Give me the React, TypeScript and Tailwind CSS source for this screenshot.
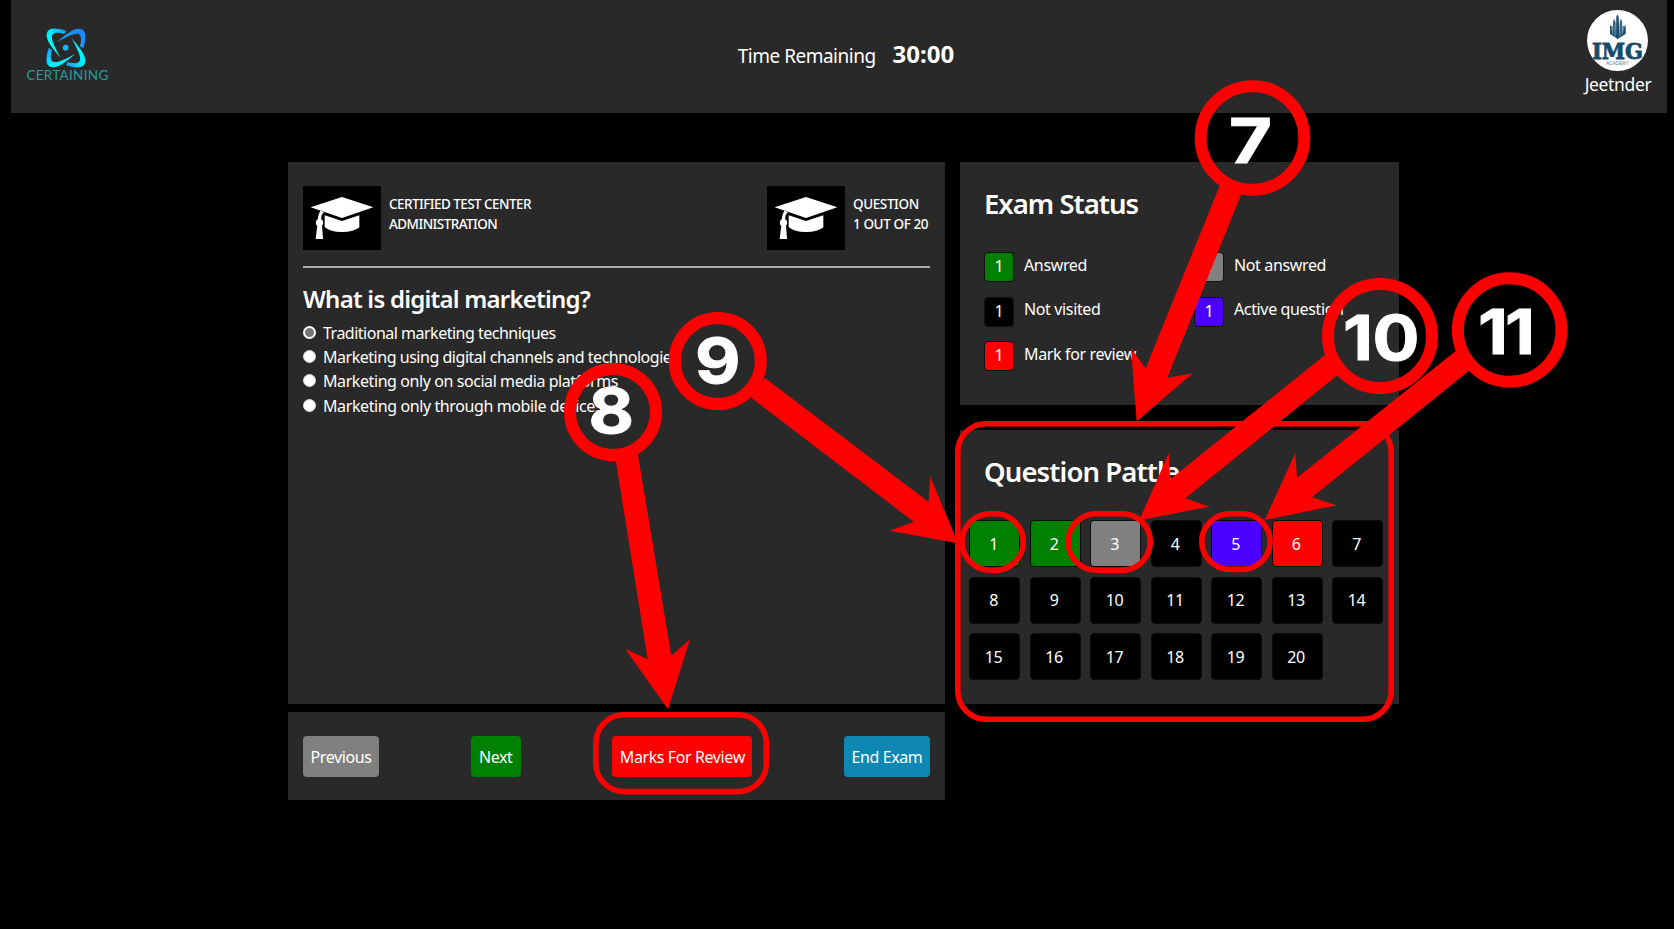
import React from "react";

const RIBBON =
  "M198 91 L193 101 C176 97 163 95 157 104 C152 114 160 132 181 172 C163 150 138 122 140 103 C142 82 162 80 198 91 Z";

function BrandLogo() {
  return (
    <div className="flex flex-col items-center w-[83px]">
      <svg className="w-[42px] h-[42px] mr-[3px]" viewBox="135 80 126 126">
        <defs>
          <linearGradient id="ribbonA" x1="0" y1="1" x2="1" y2="0">
            <stop offset="0" stopColor="#00ffff" />
            <stop offset="0.5" stopColor="#00f0ff" />
            <stop offset="1" stopColor="#1e90ff" />
          </linearGradient>
          <linearGradient id="ribbonB" x1="0" y1="0" x2="1" y2="1">
            <stop offset="0" stopColor="#1e80ff" />
            <stop offset="1" stopColor="#12b8ff" />
          </linearGradient>
        </defs>
        <path d={RIBBON} fill="url(#ribbonA)" />
        <path d={RIBBON} fill="url(#ribbonB)" transform="rotate(90 198 143)" />
        <path d={RIBBON} fill="url(#ribbonA)" transform="rotate(180 198 143)" />
        <path d={RIBBON} fill="url(#ribbonA)" transform="rotate(270 198 143)" />
        <circle cx="197" cy="142" r="8.500" fill="#18b4f5" />
      </svg>
      <span className="-mt-px font-['Lato',sans-serif] text-[13.5px] leading-[14px] tracking-[0.3px] text-[#269c9a]">
        CERTAINING
      </span>
    </div>
  );
}

function Avatar() {
  return (
    <svg className="w-[61px] h-[61px] -ml-px" viewBox="0 0 61 61">
      <circle cx="30.5" cy="30.5" r="30.5" fill="#fff" />
      <g fill="#174b6c">
        <path d="M23 14 L25.5 24 L30.5 28 L35.5 24 L38.500 14 L38.500 24 L30.700 29 L23 24 Z" />
        <path d="M29.300 7 L30.5 4.500 L31.700 7 L32.200 28 L29 28 Z" />
        <path d="M26 12 L27 8.500 L28.600 12 L29 27 L26 25 Z" opacity="0.85" />
        <path d="M32.600 12 L34 8.500 L35.200 12 L35 25 L32.200 27 Z" opacity="0.85" />
        <path d="M23 16 L25.700 16 L26 25 L23 23 Z M35.400 16 L38.500 16 L38.500 23 L35.200 25 Z" opacity="0.7" />
        <text x="5" y="48.800" fontFamily="DejaVu Serif, serif" fontWeight="700" fontSize="23" stroke="#174b6c" strokeWidth="0.900" textLength="51" lengthAdjust="spacingAndGlyphs">IMG</text>
      </g>
      <text x="19" y="55" fontFamily="Liberation Sans, sans-serif" fontSize="4.500" fill="#5c7f95" textLength="23" lengthAdjust="spacingAndGlyphs">ACADEMY</text>
    </svg>
  );
}

function CapBox() {
  return (
    <div className="w-[78px] h-16 bg-black">
      <svg className="w-[78px] h-16" viewBox="69 108 234 192" fill="#fff">
        <path d="M186 141 L280 172 L186 204 L92 172 Z" />
        <path d="M134 196 L186 213 L238 196 V232 Q222 246 186 246 Q150 246 134 231 Z" />
        <path d="M121 182 L132 186 C125 192 123 200 123 212 L113 212 C114 200 116 190 121 182 Z" />
        <circle cx="118.500" cy="218" r="11" />
        <path d="M112 226 L126 226 L129 267 L107 267 Z" />
      </svg>
    </div>
  );
}

const OPTIONS = [
  { label: "Traditional marketing techniques", focused: true, tracking: "tracking-[-0.5px]" },
  { label: "Marketing using digital channels and technologies", focused: false, tracking: "tracking-[-0.47px]" },
  { label: "Marketing only on social media platforms", focused: false, tracking: "tracking-[-0.42px]" },
  { label: "Marketing only through mobile devices", focused: false, tracking: "tracking-[-0.4px]" },
];

const LEGEND = [
  { label: "Answred", color: "bg-[#008000]" },
  { label: "Not answred", color: "bg-[#808080]" },
  { label: "Not visited", color: "bg-black" },
  { label: "Active question", color: "bg-[#4b00ff]" },
  { label: "Mark for review", color: "bg-[#ff0000]" },
];

const QUESTION_COLORS: Record<number, string> = {
  1: "bg-[#008000]",
  2: "bg-[#008000]",
  3: "bg-[#808080]",
  5: "bg-[#4b00ff]",
  6: "bg-[#ff0000]",
};

const ARROWS = [
  "1220,185 1241,195 1167.300,377.700 1192.700,373.300 1136.700,421.500 1131,348.300 1145.700,368.300",
  "615.500,459 637.500,452 671.300,655.700 690,639.300 668,709.300 625.300,649 647.700,659.300",
  "765,378 751,397.700 913.700,521.700 889.700,530.700 958,543.300 930.300,476.700 928.700,502",
  "1325.300,354.700 1337.300,375.300 1185.300,498.300 1209.300,506.700 1139.300,520.300 1168.700,453.300 1170.300,479.300",
  "1456,350.700 1469,370.700 1312,497.300 1336.300,505.300 1264.700,520 1295.300,453 1297,477.700",
];

const CIRCLES = [
  { cx: 1252.5, cy: 138, r: 51.8 },
  { cx: 613, cy: 412, r: 43 },
  { cx: 717.8, cy: 361, r: 43 },
  { cx: 1380, cy: 336, r: 52 },
  { cx: 1509.7, cy: 330, r: 51.8 },
];

const FRAMES = [
  { x: 957.8, y: 423.8, w: 433.4, h: 295.4 },
  { x: 962.1, y: 513.8, w: 61.2, h: 56.4 },
  { x: 1068.1, y: 513.8, w: 82.2, h: 56.4 },
  { x: 1201.8, y: 513.8, w: 68.4, h: 55.6 },
  { x: 595.9, y: 714.8, w: 170.4, h: 76.8 },
];

const DIGITS = [
  { t: "7", x: 1229, y: 163, w: 43 },
  { t: "8", x: 588.5, y: 432.5, w: 45.5 },
  { t: "9", x: 695, y: 382.8, w: 45.5 },
  { t: "1", x: 1343, y: 360, w: 30 },
  { t: "0", x: 1372.5, y: 360, w: 47 },
  { t: "1", x: 1478, y: 354, w: 30 },
  { t: "1", x: 1505, y: 354, w: 30 },
];

function Callouts() {
  return (
    <svg className="absolute left-0 top-0 w-[1674px] h-[929px] pointer-events-none" viewBox="0 0 1674 929">
      <g fill="#ff0000">
        {ARROWS.map((p) => (
          <polygon key={p} points={p} />
        ))}
      </g>
      <g fill="none" stroke="#ff0000">
        {CIRCLES.map((c) => (
          <circle key={c.cx} cx={c.cx} cy={c.cy} r={c.r} strokeWidth="12" />
        ))}
        {FRAMES.map((f) => (
          <rect key={f.x} x={f.x} y={f.y} width={f.w} height={f.h} rx="28.200" strokeWidth="5.600" />
        ))}
      </g>
      <g fill="#fff" stroke="#fff" strokeWidth="0.900" fontFamily="Inter, sans-serif" fontWeight="700" fontSize="62.500">
        {DIGITS.map((d) => (
          <text key={d.x} x={d.x} y={d.y} textLength={d.w} lengthAdjust="spacingAndGlyphs">
            {d.t}
          </text>
        ))}
      </g>
    </svg>
  );
}

export default function App() {
  return (
    <div className="relative w-[1674px] h-[929px] overflow-hidden bg-black text-white font-['Noto_Sans','Open_Sans',sans-serif]">
      <header className="ml-[11px] mr-[7px] h-[113px] bg-[#292929] flex justify-between">
        <div className="pl-[15px] pt-[27px] w-[200px]">
          <BrandLogo />
        </div>
        <div className="flex items-baseline gap-[17px] pl-[14px] pt-[38px] h-16 whitespace-nowrap">
          <span className="text-[19px] leading-8 tracking-[-0.5px]">Time Remaining</span>
          <span className="text-[24px] leading-8 font-bold tracking-[0px]">30:00</span>
        </div>
        <div className="flex w-[200px] flex-col items-end pt-[10px] pr-[15px]">
          <div className="flex w-[68px] flex-col items-center">
            <Avatar />
            <span className="-mt-px text-[17.500px] leading-7 tracking-[-0.35px]">Jeetnder</span>
          </div>
        </div>
      </header>

      <main className="mt-[49px] ml-[288px] flex gap-[15px]">
        <div className="w-[657px] flex flex-col gap-2">
          <section className="h-[542px] bg-[#292929] px-[15px] pt-6">
            <div className="flex justify-between text-[13.500px] leading-5 font-medium whitespace-nowrap">
              <div className="flex gap-2">
                <CapBox />
                <p className="pt-2 tracking-[-0.56px]">
                  CERTIFIED TEST CENTER
                  <br />
                  <span className="tracking-[-0.56px]">ADMINISTRATION</span>
                </p>
              </div>
              <div className="flex gap-2">
                <CapBox />
                <p className="pt-2 w-[77px] tracking-[-0.4px]">
                  QUESTION
                  <br />1 OUT OF 20
                </p>
              </div>
            </div>
            <div className="mt-4 h-[2px] bg-[#a9acab]" />
            <h2 className="mt-[15px] text-[24px] leading-8 font-semibold tracking-[-0.77px]">What is digital marketing?</h2>
            <ul className="mt-[6px]">
              {OPTIONS.map((o) => (
                <li key={o.label} className="flex h-[24.200px] items-center gap-[7px] whitespace-nowrap text-[16px] leading-6">
                  <span
                    className={
                      o.focused
                        ? "-mt-px size-[13px] rounded-full border-2 border-white bg-[#767676]"
                        : "-mt-px size-[13px] rounded-full border border-[#d8d8d8] bg-white"
                    }
                  />
                  <span className={o.tracking}>{o.label}</span>
                </li>
              ))}
            </ul>
          </section>
          <section className="flex h-[88px] items-center justify-between bg-[#292929] px-[15px] pt-px text-[16px] leading-6 whitespace-nowrap tracking-[-0.4px]">
            <button className="h-[41px] w-[76px] rounded bg-[#808080]">Previous</button>
            <button className="h-[41px] w-[50px] rounded bg-[#008000]">Next</button>
            <button className="h-[41px] w-[140px] rounded bg-[#ff0000]">Marks For Review</button>
            <button className="h-[41px] w-[86px] rounded bg-[#0e87b3]">End Exam</button>
          </section>
        </div>

        <div className="w-[439px] flex flex-col gap-[25px]">
          <section className="h-[243px] bg-[#292929] pl-6 pt-6">
            <h2 className="text-[27.500px] leading-9 font-semibold tracking-[-1.000px]">Exam Status</h2>
            <div className="mt-[30px] grid grid-cols-[210px_205px] gap-y-[14.500px]">
              {LEGEND.map((l) => (
                <div key={l.label} className="flex h-[30px] gap-[10px] whitespace-nowrap text-[16px] leading-6 tracking-[-0.36px]">
                  <span className={`${l.color} flex size-[30px] items-center justify-center rounded border border-[#111] pb-[2px]`}>1</span>
                  <span className="pt-[0.500px]">{l.label}</span>
                </div>
              ))}
            </div>
          </section>
          <section className="h-[274px] bg-[#292929] pt-6">
            <h2 className="pl-6 text-[27.500px] leading-9 font-semibold tracking-[-0.9px]">Question Pattle</h2>
            <div className="mt-[30px] ml-[9px] grid grid-cols-[repeat(7,51px)] gap-[9.500px]">
              {Array.from({ length: 20 }, (_, i) => i + 1).map((n) => (
                <button
                  key={n}
                  className={`${QUESTION_COLORS[n] ?? "bg-black"} h-[47px] rounded border border-[#0c0c0c] pr-[2px] text-[16px] leading-6 tracking-[-0.5px]`}
                >
                  {n}
                </button>
              ))}
            </div>
          </section>
        </div>
      </main>
      <Callouts />
    </div>
  );
}
